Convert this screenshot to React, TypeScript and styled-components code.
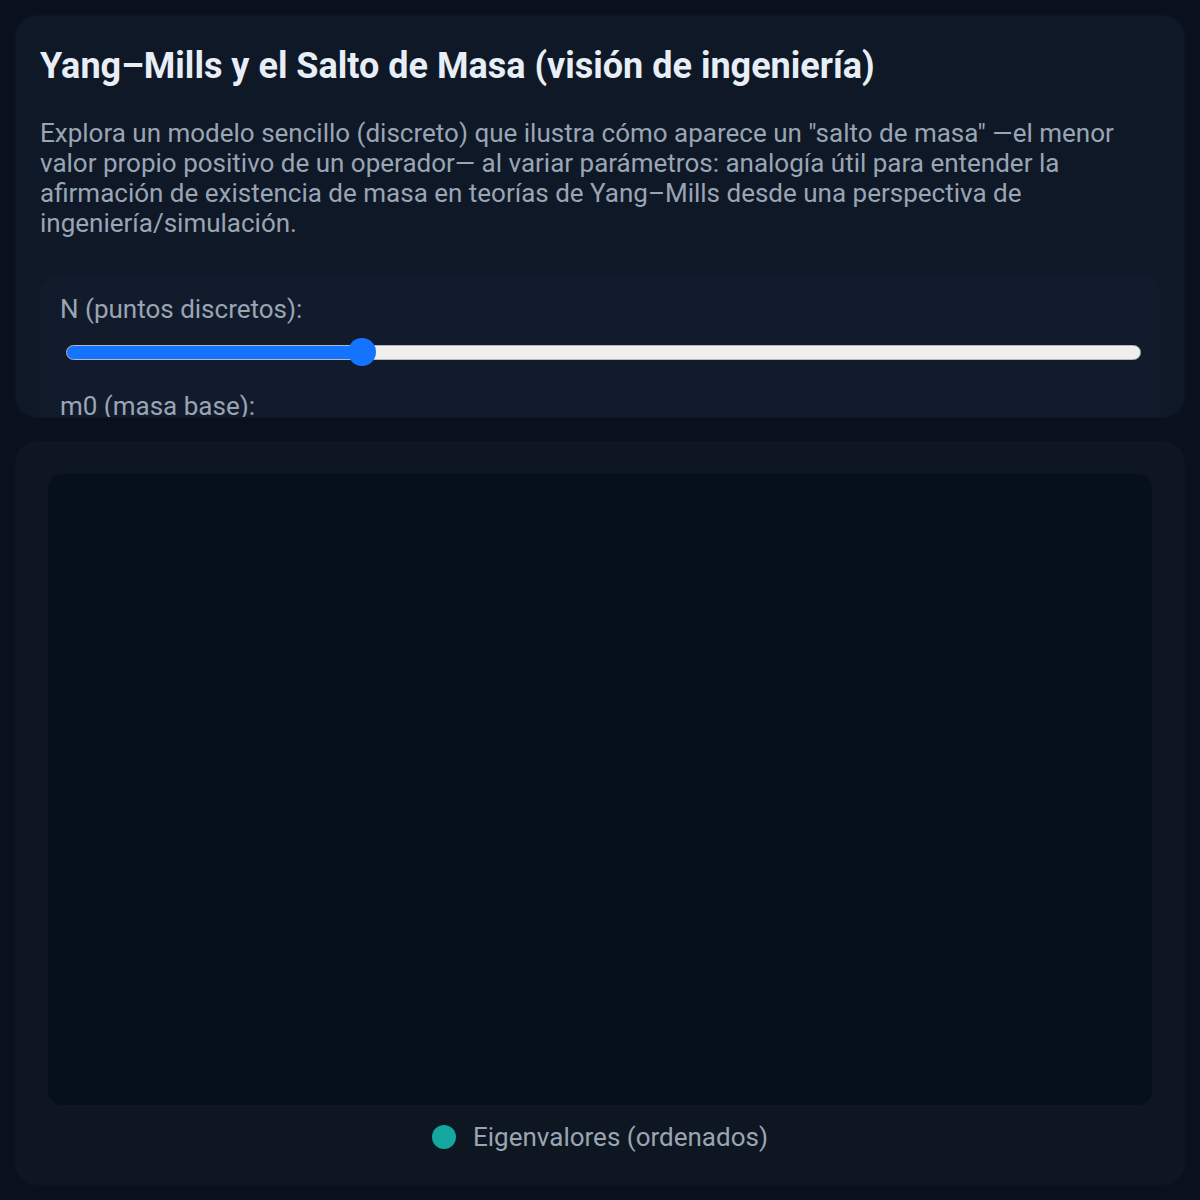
import React, { useState } from 'react'
import styled, { createGlobalStyle } from 'styled-components'

const GlobalStyle = createGlobalStyle`
  html, body {
    margin: 0;
    padding: 0;
    background: #08111d;
  }
  body {
    font-family: Roboto, "Noto Sans", "Liberation Sans", sans-serif;
    color: #e6edf5;
  }
  * {
    box-sizing: border-box;
  }
`

const Page = styled.main`
  min-height: 1200px;
  padding: 16px;
  display: flex;
  flex-direction: column;
  gap: 25px;
  background: #08111d;
`

const Card = styled.section<{ $height: number }>`
  height: ${({ $height }) => $height}px;
  overflow: hidden;
  background: #0f1827;
  border-radius: 20px;
  box-shadow: 0 0 0 1px rgba(255, 255, 255, 0.02);
`

const IntroCard = styled(Card)`
  padding: 24px 24px 0;
`

const Title = styled.h1`
  margin: 0;
  font-size: 36px;
  line-height: 52px;
  font-weight: 700;
  color: #e8eef6;
  letter-spacing: 0;
`

const Description = styled.p`
  margin: 26px 0 38px;
  font-size: 26px;
  line-height: 30px;
  color: #9aa5b4;
`

const Controls = styled.div`
  background: #121b2b;
  border-radius: 14px;
  padding: 18px 20px;
  display: flex;
  flex-direction: column;
`

const Field = styled.label`
  display: flex;
  flex-direction: column;
  gap: 14px;
  margin-bottom: 25px;
  font-size: 26px;
  line-height: 30px;
  color: #9aa5b4;
`

const Range = styled.input<{ $pct: number }>`
  -webkit-appearance: none;
  appearance: none;
  width: calc(100% - 5px);
  margin: 0 0 0 6px;
  height: 28px;
  background: transparent;
  cursor: pointer;

  &::-webkit-slider-runnable-track {
    height: 15px;
    border-radius: 8px;
    border: 1.5px solid #b5b8bd;
    background: linear-gradient(
      to right,
      #1474ff 0 ${({ $pct }) => $pct}%,
      #efefef ${({ $pct }) => $pct}% 100%
    );
  }

  &::-webkit-slider-thumb {
    -webkit-appearance: none;
    width: 28px;
    height: 28px;
    margin-top: -8px;
    border-radius: 50%;
    background: #1474ff;
    border: none;
  }
`

const ChartCard = styled(Card)`
  padding: 32px;
  display: flex;
  flex-direction: column;
  background: #0e1621;
`

const ChartArea = styled.div`
  flex: 1;
  background: #06101a;
  border-radius: 14px;
`

const Legend = styled.div`
  display: flex;
  align-items: center;
  justify-content: center;
  gap: 17px;
  margin-top: 17px;
  font-size: 26px;
  line-height: 30px;
  color: #9aa5b4;
`

const Dot = styled.span<{ $color: string }>`
  width: 24px;
  height: 24px;
  border-radius: 50%;
  background: ${({ $color }) => $color};
`

export default function App() {
  const [n, setN] = useState(61)
  const min = 10
  const max = 200
  const thumb = 28
  const track = 1075
  const frac = (n - min) / (max - min)
  // fill stops under the thumb centre
  const pct = ((thumb / 2 + frac * (track - thumb)) / track) * 100

  return (
    <>
      <GlobalStyle />
      <Page>
        <IntroCard $height={401}>
          <Title>Yang–Mills y el Salto de Masa (visión de ingeniería)</Title>
          <Description>
            Explora un modelo sencillo (discreto) que ilustra cómo aparece un "salto de masa" —el menor
            valor propio positivo de un operador— al variar parámetros: analogía útil para entender la
            afirmación de existencia de masa en teorías de Yang–Mills desde una perspectiva de
            ingeniería/simulación.
          </Description>
          <Controls>
            <Field>
              N (puntos discretos):
              <Range
                type="range"
                min={min}
                max={max}
                value={n}
                $pct={pct}
                onChange={(e) => setN(Number(e.target.value))}
              />
            </Field>
            <Field>m0 (masa base):</Field>
          </Controls>
        </IntroCard>

        <ChartCard $height={742}>
          <ChartArea />
          <Legend>
            <Dot $color="#14a7a0" />
            Eigenvalores (ordenados)
          </Legend>
        </ChartCard>
      </Page>
    </>
  )
}
